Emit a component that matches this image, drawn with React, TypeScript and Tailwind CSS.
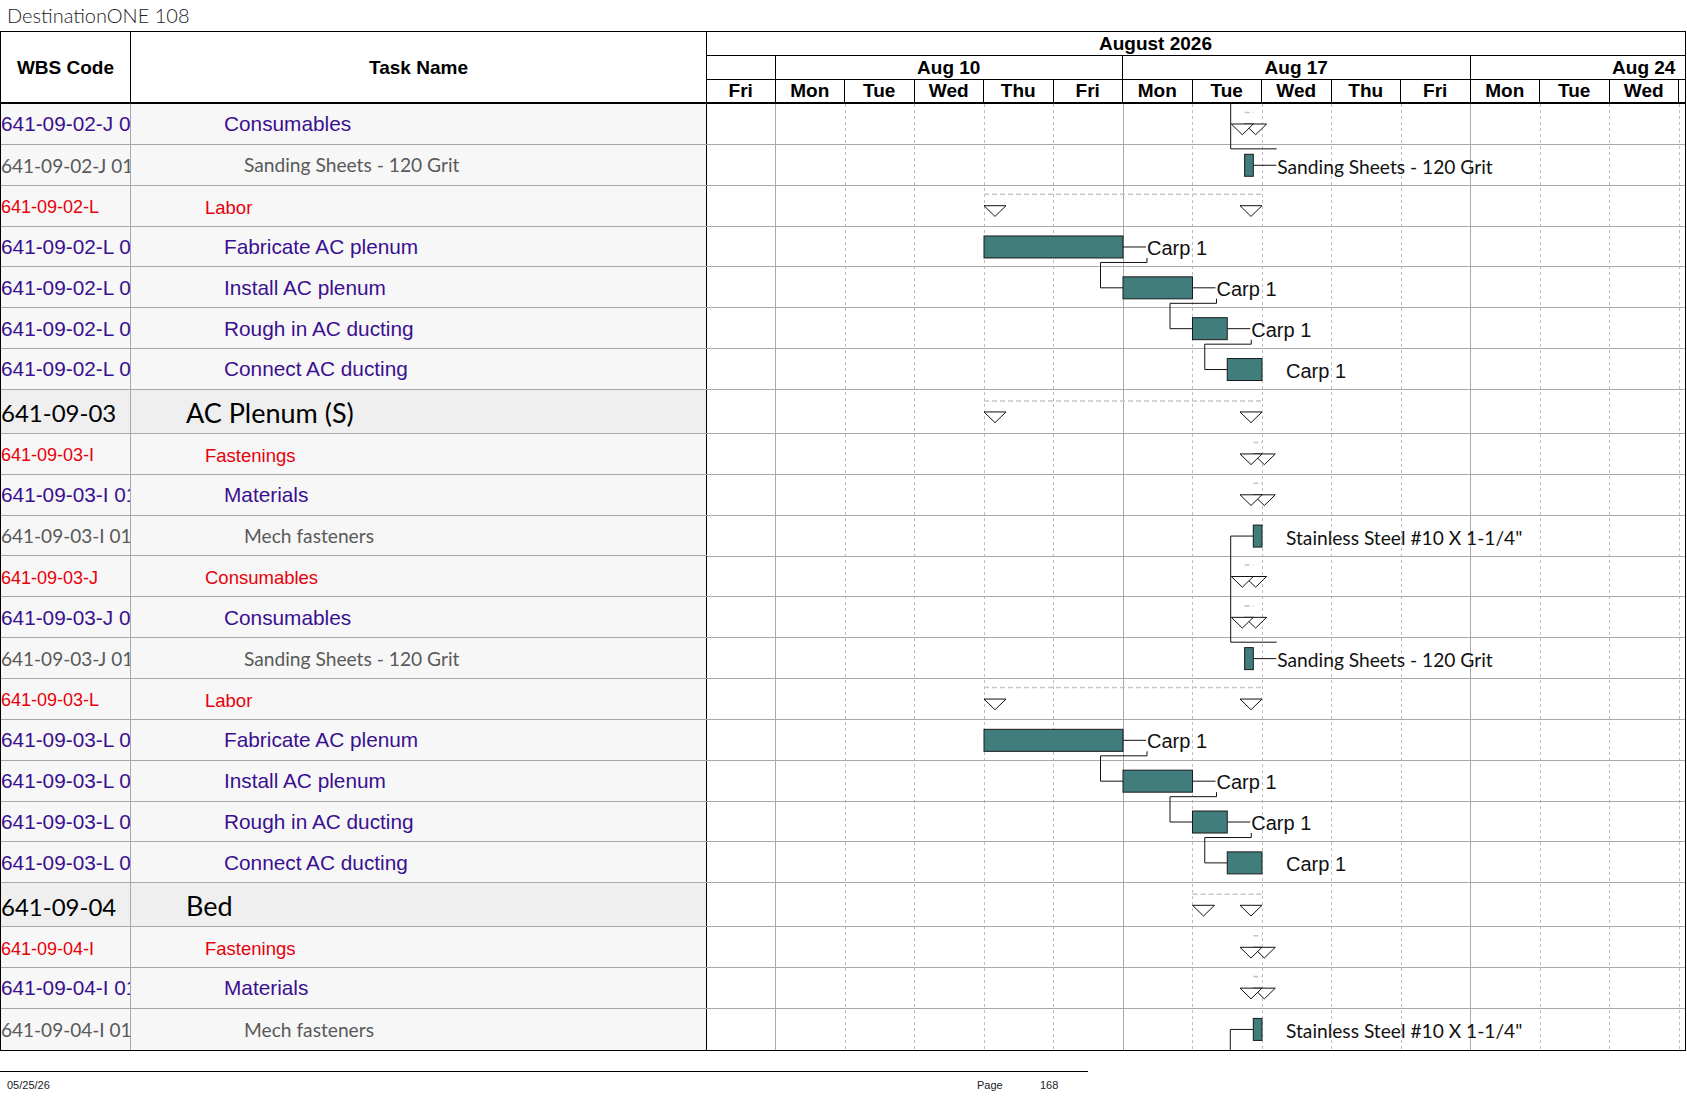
import React from "react";

type Kind = "big" | "red" | "purple" | "gray";
type Row = { wbs: string; name: string; kind: Kind };

const ROWS: Row[] = [
  { wbs: "641-09-02-J 01", name: "Consumables", kind: "purple" },
  { wbs: "641-09-02-J 01-01", name: "Sanding Sheets - 120 Grit", kind: "gray" },
  { wbs: "641-09-02-L", name: "Labor", kind: "red" },
  { wbs: "641-09-02-L 01", name: "Fabricate AC plenum", kind: "purple" },
  { wbs: "641-09-02-L 02", name: "Install AC plenum", kind: "purple" },
  { wbs: "641-09-02-L 03", name: "Rough in AC ducting", kind: "purple" },
  { wbs: "641-09-02-L 04", name: "Connect AC ducting", kind: "purple" },
  { wbs: "641-09-03", name: "AC Plenum (S)", kind: "big" },
  { wbs: "641-09-03-I", name: "Fastenings", kind: "red" },
  { wbs: "641-09-03-I 01", name: "Materials", kind: "purple" },
  { wbs: "641-09-03-I 01-01", name: "Mech fasteners", kind: "gray" },
  { wbs: "641-09-03-J", name: "Consumables", kind: "red" },
  { wbs: "641-09-03-J 01", name: "Consumables", kind: "purple" },
  { wbs: "641-09-03-J 01-01", name: "Sanding Sheets - 120 Grit", kind: "gray" },
  { wbs: "641-09-03-L", name: "Labor", kind: "red" },
  { wbs: "641-09-03-L 01", name: "Fabricate AC plenum", kind: "purple" },
  { wbs: "641-09-03-L 02", name: "Install AC plenum", kind: "purple" },
  { wbs: "641-09-03-L 03", name: "Rough in AC ducting", kind: "purple" },
  { wbs: "641-09-03-L 04", name: "Connect AC ducting", kind: "purple" },
  { wbs: "641-09-04", name: "Bed", kind: "big" },
  { wbs: "641-09-04-I", name: "Fastenings", kind: "red" },
  { wbs: "641-09-04-I 01", name: "Materials", kind: "purple" },
  { wbs: "641-09-04-I 01-01", name: "Mech fasteners", kind: "gray" },
];

const NORMAL_H = 40.85;
const TALL_H = 44;
const heightOf = (k: Kind) => (k === "big" ? TALL_H : NORMAL_H);
const tops: number[] = [];
let acc = 0;
for (const r of ROWS) {
  tops.push(acc);
  acc += heightOf(r.kind);
}
const BODY_H = acc;

const DAY = 69.5;
const X = (d: number) => DAY * d - 1; // local x inside gantt body (starts at page x=707)
const G = (gx: number) => gx - 707;
const cy = (i: number) => tops[i] + heightOf(ROWS[i].kind) / 2;

const summaries = [
  { r: 0, s: 7.75, e: 7.875 },
  { r: 2, s: 4, e: 8 },
  { r: 7, s: 4, e: 8 },
  { r: 8, s: 7.875, e: 8 },
  { r: 9, s: 7.875, e: 8 },
  { r: 11, s: 7.75, e: 7.875 },
  { r: 12, s: 7.75, e: 7.875 },
  { r: 14, s: 4, e: 8 },
  { r: 19, s: 7, e: 8 },
  { r: 20, s: 7.875, e: 8 },
  { r: 21, s: 7.875, e: 8 },
];

type Bar = { r: number; s: number; e: number; label: string; leader: boolean; cal: boolean };
const SAND = "Sanding Sheets - 120 Grit";
const STEEL = 'Stainless Steel #10 X 1-1/4"';
const bars: Bar[] = [
  { r: 1, s: 7.75, e: 7.875, label: SAND, leader: true, cal: true },
  { r: 3, s: 4, e: 6, label: "Carp 1", leader: true, cal: false },
  { r: 4, s: 6, e: 7, label: "Carp 1", leader: true, cal: false },
  { r: 5, s: 7, e: 7.5, label: "Carp 1", leader: true, cal: false },
  { r: 6, s: 7.5, e: 8, label: "Carp 1", leader: false, cal: false },
  { r: 10, s: 7.875, e: 8, label: STEEL, leader: false, cal: true },
  { r: 13, s: 7.75, e: 7.875, label: SAND, leader: true, cal: true },
  { r: 15, s: 4, e: 6, label: "Carp 1", leader: true, cal: false },
  { r: 16, s: 6, e: 7, label: "Carp 1", leader: true, cal: false },
  { r: 17, s: 7, e: 7.5, label: "Carp 1", leader: true, cal: false },
  { r: 18, s: 7.5, e: 8, label: "Carp 1", leader: false, cal: false },
  { r: 22, s: 7.875, e: 8, label: STEEL, leader: false, cal: true },
];

const links: [number, number][] = [
  [3, 4],
  [4, 5],
  [5, 6],
  [15, 16],
  [16, 17],
  [17, 18],
];

const BAR_HALF = 11;

function polyFor(a: Bar, b: Bar): string {
  const tx = X(a.e) + 24;
  const yA = cy(a.r) + BAR_HALF;
  const yMid = yA + 4.5;
  const xl = X(b.s) - 22.5;
  const yB = cy(b.r);
  return `${tx},${yA} ${tx},${yMid} ${xl},${yMid} ${xl},${yB} ${X(b.s)},${yB}`;
}

const extraLines: string[] = [
  `${G(1230.7)},0 ${G(1230.7)},${tops[1] + 4} ${G(1276.7)},${tops[1] + 4}`,
  `${X(7.875)},${cy(10)} ${G(1230.7)},${cy(10)} ${G(1230.7)},${tops[13] + 4} ${G(1276.7)},${tops[13] + 4}`,
  `${X(7.875)},${cy(22)} ${G(1230.3)},${cy(22)} ${G(1230.3)},${BODY_H}`,
];

const wbsText: Record<Kind, string> = {
  big: "text-[24px] pt-[4px] text-black font-['Lato',sans-serif]",
  red: "text-[18px] pt-[4px] text-[#e8000b] font-['Liberation_Sans',Arial,sans-serif]",
  purple: "text-[20.8px] text-[#3a1090] font-['Liberation_Sans',Arial,sans-serif]",
  gray: "text-[19px] pt-[2px] text-[#595959] font-['Lato',sans-serif]",
};
const taskText: Record<Kind, string> = {
  big: "text-[27px] pt-[4px] pl-[55px] text-black font-['Lato',sans-serif]",
  red: "text-[18.5px] pt-[4px] pl-[74px] text-[#e8000b] font-['Liberation_Sans',Arial,sans-serif]",
  purple: "text-[20.8px] pl-[93px] text-[#3a1090] font-['Liberation_Sans',Arial,sans-serif]",
  gray: "text-[19.2px] pt-[2px] pl-[113px] text-[#595959] font-['Lato',sans-serif]",
};

const DAYS = ["Fri", "Mon", "Tue", "Wed", "Thu", "Fri", "Mon", "Tue", "Wed", "Thu", "Fri", "Mon", "Tue", "Wed", "Thu"];

function GanttBody() {
  const vlines = [];
  for (let d = 1; d <= 14; d++) {
    const x = Math.floor(X(d)) + 0.5;
    const week = d === 1 || d === 6 || d === 11;
    vlines.push(
      <line
        key={"v" + d}
        x1={x}
        x2={x}
        y1={0}
        y2={BODY_H}
        stroke={week ? "#a9a9a9" : "#bdbdbd"}
        strokeWidth={1}
        strokeDasharray={week ? undefined : "3 3"}
      />
    );
  }
  const hlines = ROWS.slice(0, ROWS.length - 1).map((r, i) => {
    const y = Math.round(tops[i] + heightOf(r.kind)) - 0.5;
    return <line key={"h" + i} x1={0} x2={978} y1={y} y2={y} stroke="#a8a8a8" strokeWidth={1} />;
  });

  const sumEls = summaries.map((s, k) => {
    const tall = ROWS[s.r].kind === "big";
    const top = tops[s.r];
    const dy = top + (tall ? 11 : 8.5);
    const ty = top + (tall ? 22 : 20);
    const xs = X(s.s);
    const xe = X(s.e);
    const tri = (x0: number) => `M${x0},${ty} L${x0 + 22},${ty} L${x0 + 11},${ty + 10.7} Z`;
    return (
      <g key={"s" + k}>
        <line x1={xs} x2={xe} y1={dy} y2={dy} stroke="#c6c6c6" strokeWidth={1.6} strokeDasharray="5 3" />
        <path d={tri(xs)} fill="white" stroke="#111" strokeWidth={1} />
        <path d={tri(xe - 22)} fill="white" stroke="#111" strokeWidth={1} />
      </g>
    );
  });

  const barEls = bars.map((b, k) => {
    const c = cy(b.r);
    const x0 = X(b.s);
    const x1 = X(b.e);
    return (
      <g key={"b" + k}>
        {b.leader && <line x1={x1} x2={x1 + 23} y1={c} y2={c} stroke="#111" strokeWidth={1} />}
        <rect x={x0} y={c - BAR_HALF} width={x1 - x0} height={BAR_HALF * 2} fill="#427d7d" stroke="#1a1a1a" strokeWidth={1} />
        <text
          x={x1 + 24}
          y={c + 1}
          dominantBaseline="central"
          fontSize={b.cal ? 19.2 : 20}
          fontFamily={b.cal ? "Lato, sans-serif" : "Liberation Sans, Arial, sans-serif"}
          fill="#111"
        >
          {b.label}
        </text>
      </g>
    );
  });

  const byRow: Record<number, Bar> = {};
  bars.forEach((b) => (byRow[b.r] = b));
  const linkEls = links.map(([a, b], k) => (
    <polyline key={"l" + k} points={polyFor(byRow[a], byRow[b])} fill="none" stroke="#111" strokeWidth={1} />
  ));
  const extraEls = extraLines.map((p, k) => (
    <polyline key={"e" + k} points={p} fill="none" stroke="#111" strokeWidth={1} />
  ));

  return (
    <svg width={978} height={BODY_H} className="block shrink-0">
      {vlines}
      {hlines}
      {sumEls}
      {linkEls}
      {extraEls}
      {barEls}
    </svg>
  );
}

export default function App() {
  return (
    <div className="w-[1687px] h-[1097px] bg-white overflow-hidden relative text-black font-['Liberation_Sans',Arial,sans-serif]">
      <div className="h-[31px] pl-[7px] pt-[3px] text-[20px] leading-[24px] font-light text-[#222] font-['Lato',sans-serif]">
        DestinationONE 108
      </div>
      <div className="w-[1686px] border border-black">
        {/* header */}
        <div className="flex h-[72px] border-b-2 border-black leading-none">
          <div className="w-[130px] shrink-0 border-r border-black flex items-center justify-center text-[19px] font-bold">
            WBS Code
          </div>
          <div className="w-[576px] shrink-0 border-r border-black flex items-center justify-center text-[19px] font-bold">
            Task Name
          </div>
          <div className="w-[978px] shrink-0 overflow-hidden flex flex-col text-[19px] font-bold">
            <div className="h-[24px] shrink-0 border-b border-black flex items-center pl-[392px] whitespace-nowrap">
              August 2026
            </div>
            <div className="h-[24px] shrink-0 border-b border-black flex whitespace-nowrap">
              <div className="w-[68.5px] shrink-0 border-r border-black" />
              <div className="w-[347.5px] shrink-0 border-r border-black flex items-center justify-center">Aug 10</div>
              <div className="w-[347.5px] shrink-0 border-r border-black flex items-center justify-center">Aug 17</div>
              <div className="w-[347.5px] shrink-0 border-r border-black flex items-center justify-center">Aug 24</div>
            </div>
            <div className="flex-1 flex whitespace-nowrap">
              {DAYS.map((d, i) => (
                <div
                  key={i}
                  className={
                    (i === 0 ? "w-[68.5px]" : "w-[69.5px]") +
                    " shrink-0 border-r border-black flex items-center justify-center pb-[1px]"
                  }
                >
                  {d}
                </div>
              ))}
            </div>
          </div>
        </div>
        {/* body */}
        <div className="flex">
          <div className="w-[706px] shrink-0 flex flex-col">
            {ROWS.map((r, i) => (
              <div
                key={i}
                className={
                  (r.kind === "big" ? "h-[44px] bg-[#efefef]" : "h-[40.85px] bg-[#f7f7f7]") +
                  " flex border-b border-[#a8a8a8] last:border-b-0"
                }
              >
                <div
                  className={
                    "w-[130px] shrink-0 border-r border-[#a8a8a8] flex items-center overflow-hidden whitespace-nowrap " +
                    wbsText[r.kind]
                  }
                >
                  {r.wbs}
                </div>
                <div
                  className={
                    "w-[576px] shrink-0 border-r border-black flex items-center whitespace-nowrap overflow-hidden " +
                    taskText[r.kind]
                  }
                >
                  {r.name}
                </div>
              </div>
            ))}
          </div>
          <GanttBody />
        </div>
      </div>
      <div className="mt-[20px] w-[1088px] border-t border-black">
        <div className="flex pt-[7px] text-[11px] leading-[13px] text-[#222]">
          <div className="w-[977px] shrink-0 pl-[7px]">05/25/26</div>
          <div className="w-[63px] shrink-0">Page</div>
          <div>168</div>
        </div>
      </div>
    </div>
  );
}
